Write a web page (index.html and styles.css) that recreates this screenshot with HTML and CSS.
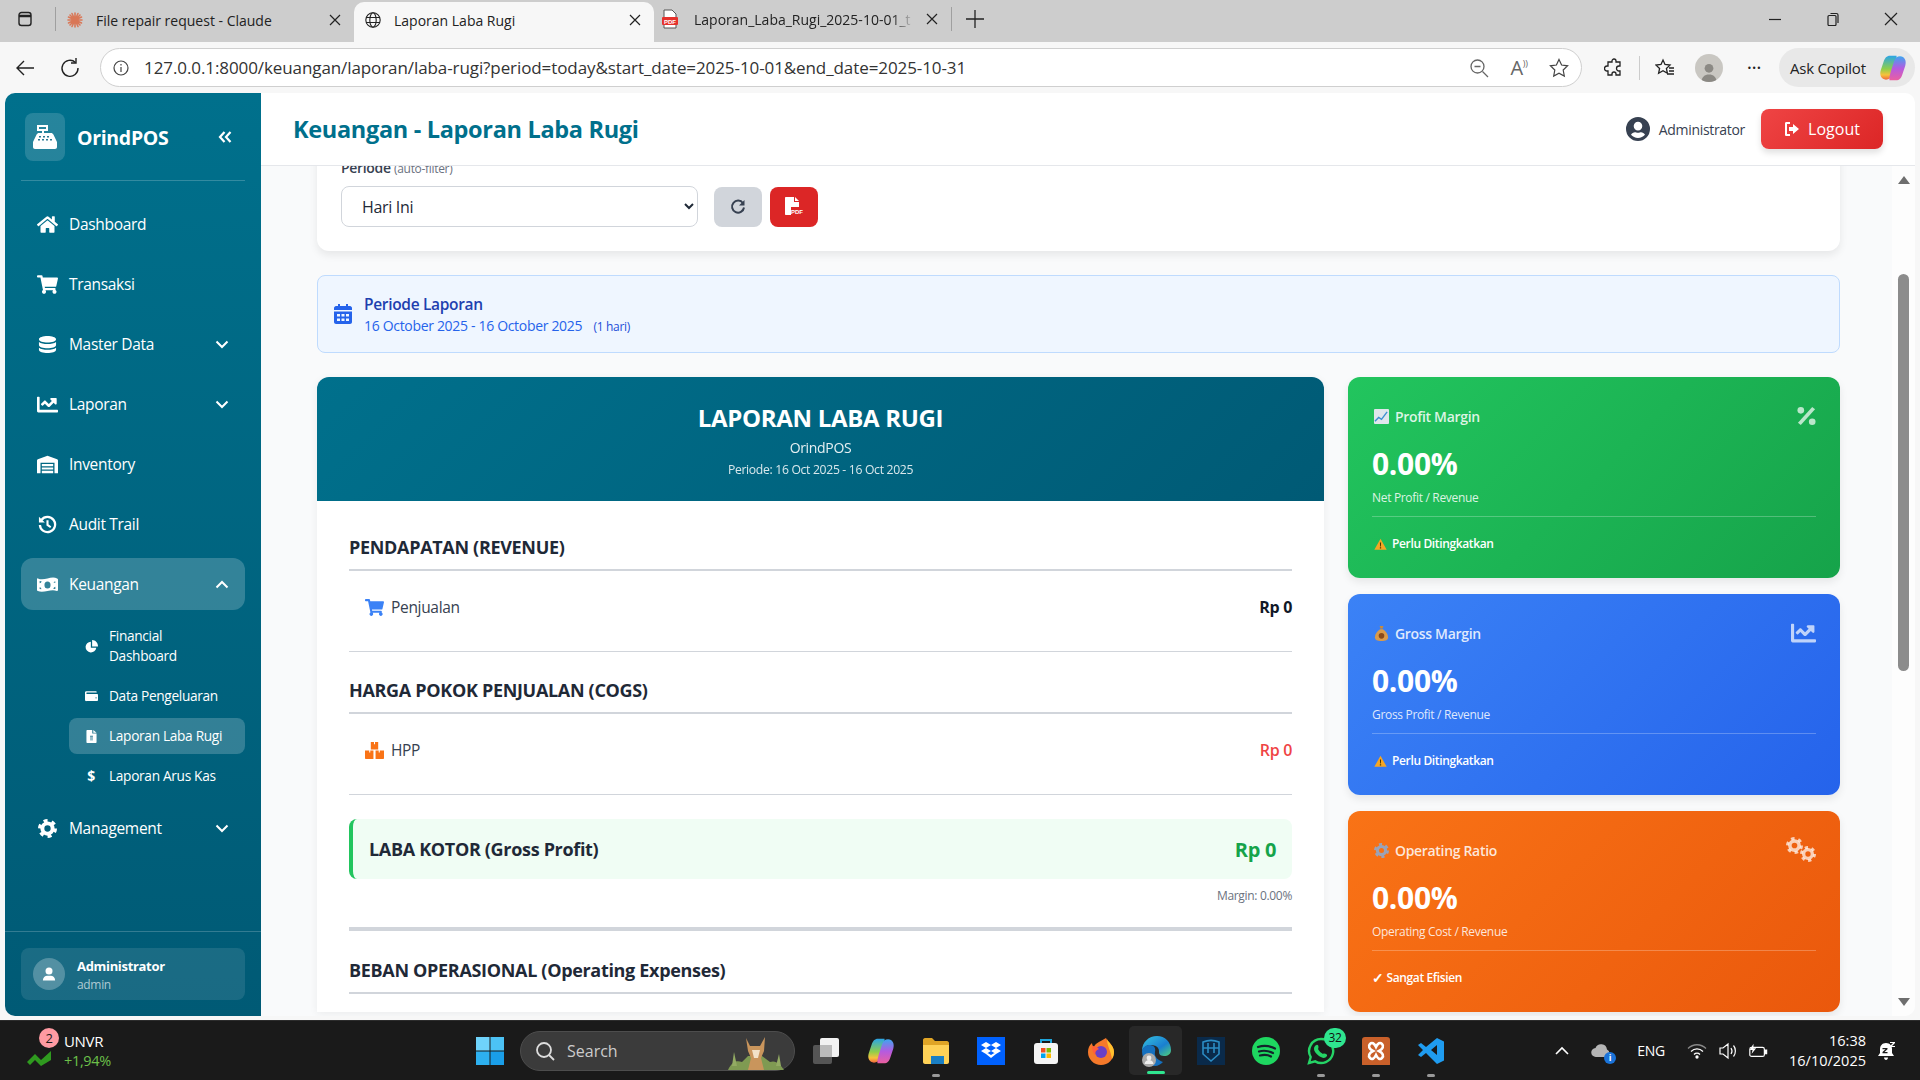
FILE: index.html
```html
<!DOCTYPE html>
<html lang="en">
  <head>
    <meta charset="UTF-8">
    <meta name="viewport" content="width=device-width, initial-scale=1.0">
    <title>Laporan Laba Rugi</title>
    <link rel="stylesheet" href="styles.css">
  </head>
  <body>
    <!-- Shared icons -->
    <svg class="defs" width="0" height="0">
      <defs>
        <symbol id="i-home" viewBox="0 0 576 512"><path d="M280.37 148.26L96 300.11V464a16 16 0 0 0 16 16l112.06-.29a16 16 0 0 0 15.92-16V368a16 16 0 0 1 16-16h64a16 16 0 0 1 16 16v95.64a16 16 0 0 0 16 16.05L464 480a16 16 0 0 0 16-16V300L295.67 148.26a12.19 12.19 0 0 0-15.3 0zM571.6 251.47L488 182.56V44.05a12 12 0 0 0-12-12h-56a12 12 0 0 0-12 12v72.61L318.47 43a48 48 0 0 0-61 0L4.34 251.47a12 12 0 0 0-1.6 16.9l25.5 31A12 12 0 0 0 45.15 301l235.22-193.74a12.19 12.19 0 0 1 15.3 0L530.9 301a12 12 0 0 0 16.9-1.6l25.5-31a12 12 0 0 0-1.7-16.93z"/></symbol>
        <symbol id="i-cart" viewBox="0 0 576 512"><path d="M528.12 301.319l47.273-208C578.806 78.301 567.391 64 551.99 64H159.208l-9.166-44.81C147.758 8.021 137.93 0 126.529 0H24C10.745 0 0 10.745 0 24v16c0 13.255 10.745 24 24 24h69.883l70.248 343.435C147.325 417.1 136 435.222 136 456c0 30.928 25.072 56 56 56s56-25.072 56-56c0-15.674-6.447-29.835-16.824-40h209.647C430.447 426.165 424 440.326 424 456c0 30.928 25.072 56 56 56s56-25.072 56-56c0-22.172-12.888-41.332-31.579-50.405l5.517-24.276c3.413-15.018-8.002-29.319-23.403-29.319H218.117l-6.545-32h293.145c11.206 0 20.92-7.754 23.403-18.681z"/></symbol>
        <symbol id="i-chart" viewBox="0 60 512 392"><path d="M496 384H64V80c0-8.84-7.16-16-16-16H16C7.16 64 0 71.16 0 80v336c0 17.67 14.33 32 32 32h464c8.84 0 16-7.16 16-16v-32c0-8.84-7.16-16-16-16zM464 96H345.94c-21.38 0-32.09 25.85-16.97 40.97l32.4 32.4L288 242.75l-73.37-73.37c-12.5-12.5-32.76-12.5-45.25 0l-68.69 68.69c-6.25 6.25-6.25 16.38 0 22.63l22.62 22.62c6.25 6.25 16.38 6.25 22.63 0L192 237.25l73.37 73.37c12.5 12.5 32.76 12.5 45.25 0l96-96 32.4 32.4c15.12 15.12 40.97 4.41 40.97-16.97V112c.01-8.84-7.15-16-15.99-16z"/></symbol>
        <symbol id="i-db" viewBox="0 0 20 20"><path d="M10 1c4.6 0 9 1.3 9 3.5S14.600 8 10 8 1 6.700 1 4.500 5.400 1 10 1zM1 7.300C2.800 8.900 6.400 9.500 10 9.500s7.200-.6 9-2.200v3.200c0 2.200-4.400 3.500-9 3.500s-9-1.300-9-3.500zM1 13.300c1.800 1.600 5.400 2.200 9 2.200s7.200-.6 9-2.200v2.200c0 2.200-4.400 3.500-9 3.500s-9-1.300-9-3.500z"/></symbol>
        <symbol id="i-warehouse" viewBox="0 0 24 20"><path d="M12 0l11 4c.6.2 1 .8 1 1.400V20h-4V8H4v12H0V5.400C0 4.800.4 4.200 1 4z"/><path d="M5.500 9.500h13v2.500h-13zM5.500 13.300h13v2.500h-13zM5.500 17.100h13V20h-13z"/></symbol>
        <symbol id="i-history" viewBox="0 0 20 20"><path d="M3.600 5.200A8 8 0 1 1 2 10.500" fill="none" stroke="currentColor" stroke-width="2.400"/><path d="M1 1.800l6.200 6.200H1z"/><path d="M10 5.500V10.500l3.400 2.400" fill="none" stroke="currentColor" stroke-width="2.200"/></symbol>
        <symbol id="i-money" viewBox="0 0 24 18"><path fill-rule="evenodd" d="M1 2c3.500 1.500 7 1 11 0s8-1.500 11 0c.6.2 1 .7 1 1.300v12c0 .8-.8 1.200-1.400 1-3.100-1.300-6.600-.9-10.600.1s-8 1.500-11 .1c-.6-.2-1-.7-1-1.300V3c0-.8.400-1.200 1-1zM12 5.500a3.500 4 0 1 0 0 8 3.500 4 0 0 0 0-8zM3 5v2.500c1.300 0 2-.8 2.200-2.200zM21 5.500c-1 0-1.800.5-2 1.500h2zM3 12v2l2 .3c0-1.300-.8-2.300-2-2.300zM21 11.500c-1.300.1-2 1.100-2.200 2.500l2.200.1z"/></symbol>
        <symbol id="i-pie" viewBox="0 0 20 20"><path d="M9 2.500a8.300 8.300 0 1 0 8.400 9.500H9z"/><path d="M11 0v10h9c0-5.500-4-10-9-10z"/></symbol>
        <symbol id="i-wallet" viewBox="0 0 20 16"><path d="M2 0h15c.6 0 1 .4 1 1v1H3c-.6 0-1 .4-1 1s.4 1 1 1h15.500c.8 0 1.500.7 1.500 1.500v8c0 .8-.7 1.500-1.500 1.500H2.500C1.100 15.500 0 14.400 0 13V2C0 .900.900 0 2 0zm15 9a1 1 0 1 0 0 2 1 1 0 0 0 0-2z"/></symbol>
        <symbol id="i-invoice" viewBox="0 0 14 18"><path d="M1 0h7v5h6v12c0 .6-.4 1-1 1H1c-.6 0-1-.4-1-1V1c0-.6.400-1 1-1zM9.500 0L14 3.800H9.500z"/><path d="M5 8h4v1.300H5zM5 10.500h4v1.300H5zM5 13h4v1.300H5z" fill="#2c7a93"/></symbol>
        <symbol id="i-cog" viewBox="0 0 24 24"><circle cx="12" cy="12" r="6.500" fill="none" stroke="currentColor" stroke-width="5"/><circle cx="12" cy="12" r="10" fill="none" stroke="currentColor" stroke-width="4" stroke-dasharray="5 5.470"/></symbol>
        <symbol id="i-user" viewBox="0 0 16 16"><circle cx="8" cy="4.500" r="4"/><path d="M1 15.500c0-3.400 2.400-5.500 5-5.500h4c2.600 0 5 2.100 5 5.500z"/></symbol>
        <symbol id="i-usercircle" viewBox="0 0 24 24"><path fill-rule="evenodd" d="M12 0a12 12 0 1 1 0 24 12 12 0 0 1 0-24zm0 4.800a4.300 4.300 0 1 0 0 8.600 4.300 4.300 0 0 0 0-8.600zM12 21c2.800 0 5.300-1.200 7-3.200-.8-1.700-2.400-2.600-4-2.600-.7 0-1.700.6-3 .6s-2.300-.6-3-.6c-1.600 0-3.200.9-4 2.600 1.700 2 4.200 3.200 7 3.200z"/></symbol>
        <symbol id="i-warn" viewBox="0 0 16 16"><path d="M8 1l7.600 13.500H.4z" fill="#f6a623"/><path d="M7.300 5.500h1.400l-.2 5h-1zM7.200 11.500h1.600v1.500H7.200z" fill="#4a3500"/></symbol>
        <symbol id="i-gear-emoji" viewBox="0 0 24 24"><circle cx="12" cy="12" r="6.500" fill="none" stroke="#9aa3b8" stroke-width="5"/><circle cx="12" cy="12" r="10" fill="none" stroke="#9aa3b8" stroke-width="4" stroke-dasharray="5 5.470"/></symbol>
        <linearGradient id="g-edge" x1="0" y1="0" x2="1" y2="1"><stop offset="0" stop-color="#36c3e0"/><stop offset=".6" stop-color="#1a7fd0"/><stop offset="1" stop-color="#50d27a"/></linearGradient>
        <linearGradient id="g-cop" x1="0" y1="0" x2="0" y2="1"><stop offset="0" stop-color="#2aa5e8"/><stop offset=".55" stop-color="#8fce4a"/><stop offset=".8" stop-color="#f7c23c"/><stop offset="1" stop-color="#f0683c"/></linearGradient>
        <linearGradient id="g-cop2" x1="0" y1="0" x2="0" y2="1"><stop offset="0" stop-color="#ea5fa0"/><stop offset=".5" stop-color="#b45be0"/><stop offset="1" stop-color="#3ea5f0"/></linearGradient>
        <symbol id="i-copilot" viewBox="0 0 24 24"><path d="M15 1.500H9.500c-3 0-4.500 2-5.500 5L1.500 14c-1.300 4 .5 8 4.500 8 2.500 0 4-1.500 5-4l3-9.500c.5-2 1.500-5 1-7z" fill="url(#g-cop)"/><path d="M15 1.500H9.500c-3 0-4.500 2-5.500 5L1.500 14c-1.300 4 .5 8 4.500 8 2.500 0 4-1.500 5-4l3-9.500c.5-2 1.500-5 1-7z" fill="url(#g-cop2)" transform="rotate(180 12 12)"/></symbol>
      </defs>
    </svg>

    <div class="screen">
      <!-- Browser tabs -->
      <div class="tabbar">
        <div class="tab-side">
          <svg class="ic16" viewBox="0 0 16 16" fill="none" stroke="#222" stroke-width="1.400"><rect x="2" y="1.500" width="12" height="13" rx="2.500"/><path d="M2 5h12" stroke-width="2.500"/></svg>
        </div>
        <div class="tab">
          <svg class="ic16" viewBox="0 0 16 16" stroke="#d97757" stroke-width="1.600" stroke-linecap="round"><path d="M8 1v14M1 8h14M3 3l10 10M13 3L3 13M5 1.500l6 13M11 1.500l-6 13M1.500 5l13 6M1.500 11l13-6"/></svg>
          <span class="tab-title">File repair request - Claude</span>
          <svg class="tab-x" viewBox="0 0 12 12" stroke="#222" stroke-width="1.200"><path d="M1 1l10 10M11 1L1 11"/></svg>
        </div>
        <div class="tab tab-active">
          <svg class="ic16" viewBox="0 0 16 16" fill="none" stroke="#222" stroke-width="1.100"><circle cx="8" cy="8" r="7.200"/><ellipse cx="8" cy="8" rx="3.200" ry="7.200"/><path d="M1 5.500h14M1 10.500h14"/></svg>
          <span class="tab-title">Laporan Laba Rugi</span>
          <svg class="tab-x" viewBox="0 0 12 12" stroke="#222" stroke-width="1.200"><path d="M1 1l10 10M11 1L1 11"/></svg>
        </div>
        <div class="tab tab-pdf">
          <svg class="ic20" viewBox="0 0 20 20"><path d="M4 1h8l4 4v14H4z" fill="#fff" stroke="#555"/><rect x="2" y="8" width="16" height="8" rx="1" fill="#e5322d"/><text x="10" y="14.500" class="pdf-mini">PDF</text></svg>
          <span class="tab-title tab-fade">Laporan_Laba_Rugi_2025-10-01_t</span>
          <svg class="tab-x" viewBox="0 0 12 12" stroke="#222" stroke-width="1.200"><path d="M1 1l10 10M11 1L1 11"/></svg>
        </div>
        <div class="tab-new">
          <svg class="ic20" viewBox="0 0 20 20" stroke="#222" stroke-width="1.300"><path d="M10 1v18M1 10h18"/></svg>
        </div>
        <div class="window-controls">
          <svg class="ic14" viewBox="0 0 14 14" stroke="#222" stroke-width="1.200"><path d="M1 7.500h12"/></svg>
          <svg class="ic14" viewBox="0 0 14 14" fill="none" stroke="#222" stroke-width="1.200"><rect x="2" y="3.500" width="8" height="10" rx="1"/><path d="M4.500 1.500h6a1.500 1.500 0 0 1 1.500 1.500v8"/></svg>
          <svg class="ic14" viewBox="0 0 14 14" stroke="#222" stroke-width="1.200"><path d="M1 1l12 12M13 1L1 13"/></svg>
        </div>
      </div>

      <!-- Address bar -->
      <div class="toolbar">
        <svg class="tool-back ic20" viewBox="0 0 20 20" fill="none" stroke="#222" stroke-width="1.400"><path d="M19 10H2M9 3l-7 7 7 7"/></svg>
        <svg class="tool-reload ic20" viewBox="0 0 20 20" fill="none" stroke="#222" stroke-width="1.400"><path d="M15.500 4.500A8 8 0 1 0 18 10"/><path d="M16 0v5h-5"/></svg>
        <div class="address">
          <svg class="ic16" viewBox="0 0 16 16" fill="none" stroke="#444" stroke-width="1.200"><circle cx="8" cy="8" r="7"/><path d="M8 7v5M8 4v1.500"/></svg>
          <span class="url">127.0.0.1:8000/keuangan/laporan/laba-rugi?period=today&amp;start_date=2025-10-01&amp;end_date=2025-10-31</span>
          <div class="address-tools">
            <svg class="ic20" viewBox="0 0 20 20" fill="none" stroke="#666" stroke-width="1.300"><circle cx="8.500" cy="8.500" r="6.500"/><path d="M13.500 13.500L19 19M5.500 8.500h6"/></svg>
            <span class="read-aloud">A<sup>))</sup></span>
            <svg class="ic20" viewBox="0 0 20 20" fill="none" stroke="#444" stroke-width="1.200"><path d="M10 1.500l2.600 5.500 6 .8-4.400 4.200 1.100 6-5.300-2.900-5.300 2.900 1.100-6L1.400 7.800l6-.8z"/></svg>
          </div>
        </div>
        <div class="tool-right">
          <svg class="ic20" viewBox="0 0 20 20" fill="none" stroke="#222" stroke-width="1.300"><path d="M8 3a2 2 0 0 1 4 0v1h4v4h-1a2.500 2.500 0 0 0 0 5h1v4h-4v-1a2 2 0 0 0-4 0v1H4v-4H3a2.500 2.500 0 0 1 0-5h1V4h4z"/></svg>
          <span class="tool-sep"></span>
          <svg class="ic20" viewBox="0 0 20 20" fill="none" stroke="#222" stroke-width="1.300"><path d="M8 2l2 4.500 5 .6-3.600 3.400 1 4.800L8 12.800l-4.400 2.500 1-4.800L1 7.100l5-.6zM14 10h5M14 13h5M12 16h7"/></svg>
          <span class="tool-avatar"><svg class="ic20" viewBox="0 0 16 16" fill="#8b8984"><circle cx="8" cy="5" r="3.500"/><path d="M2 16c0-4 2.500-6 6-6s6 2 6 6z"/></svg></span>
          <span class="tool-dots">&middot;&middot;&middot;</span>
        </div>
        <div class="copilot-pill">
          <span>Ask Copilot</span>
          <svg class="ic28"><use href="#i-copilot"/></svg>
        </div>
      </div>

      <!-- The page itself -->
      <div class="page">
        <aside class="sidebar">
          <div class="brand">
            <div class="brand-logo">
              <svg class="brand-ic" viewBox="0 0 26 24" fill="#fff"><path d="M5 0h11v6H12v2h7c1 0 2 .6 2.400 1.500L25 17v5c0 1-.8 2-2 2H3c-1.200 0-2-1-2-2v-5L4.600 9.500C5 8.600 6 8 7 8h3V6H5zM7 2v2h7V2z"/><path d="M7 11h2v1.500H7zM11 11h2v1.500h-2zM15 11h2v1.500h-2zM6 14h2v1.500H6zM10 14h2v1.500h-2zM14 14h2v1.500h-2zM18 14h2v1.500h-2z" fill="#2c7a93"/></svg>
            </div>
            <span class="brand-name">OrindPOS</span>
            <svg class="brand-toggle" viewBox="0 0 14 12" fill="none" stroke="#fff" stroke-width="2.200"><path d="M6.500 1L2 6l4.500 5M12.500 1L8 6l4.500 5"/></svg>
          </div>

          <nav class="nav">
            <a class="nav-item"><span class="nav-ic"><svg class="ic-nav"><use href="#i-home"/></svg></span>Dashboard</a>
            <a class="nav-item"><span class="nav-ic"><svg class="ic-nav"><use href="#i-cart"/></svg></span>Transaksi</a>
            <a class="nav-item"><span class="nav-ic"><svg class="ic-nav"><use href="#i-db"/></svg></span>Master Data<svg class="nav-caret" viewBox="0 0 14 9" fill="none" stroke="#fff" stroke-width="2"><path d="M1.500 1.500L7 7l5.500-5.500"/></svg></a>
            <a class="nav-item"><span class="nav-ic"><svg class="ic-nav"><use href="#i-chart"/></svg></span>Laporan<svg class="nav-caret" viewBox="0 0 14 9" fill="none" stroke="#fff" stroke-width="2"><path d="M1.500 1.500L7 7l5.500-5.500"/></svg></a>
            <a class="nav-item"><span class="nav-ic"><svg class="ic-nav"><use href="#i-warehouse"/></svg></span>Inventory</a>
            <a class="nav-item"><span class="nav-ic"><svg class="ic-nav"><use href="#i-history"/></svg></span>Audit Trail</a>
            <a class="nav-item nav-open"><span class="nav-ic"><svg class="ic-nav"><use href="#i-money"/></svg></span>Keuangan<svg class="nav-caret" viewBox="0 0 14 9" fill="none" stroke="#fff" stroke-width="2"><path d="M1.500 7.500L7 2l5.500 5.500"/></svg></a>
            <div class="subnav">
              <a class="sub-item"><span class="sub-ic"><svg class="ic-sub"><use href="#i-pie"/></svg></span><span>Financial<br>Dashboard</span></a>
              <a class="sub-item"><span class="sub-ic"><svg class="ic-sub"><use href="#i-wallet"/></svg></span>Data Pengeluaran</a>
              <a class="sub-item sub-active"><span class="sub-ic"><svg class="ic-sub"><use href="#i-invoice"/></svg></span>Laporan Laba Rugi</a>
              <a class="sub-item"><span class="sub-ic sub-dollar">$</span>Laporan Arus Kas</a>
            </div>
            <a class="nav-item"><span class="nav-ic"><svg class="ic-nav"><use href="#i-cog"/></svg></span>Management<svg class="nav-caret" viewBox="0 0 14 9" fill="none" stroke="#fff" stroke-width="2"><path d="M1.500 1.500L7 7l5.500-5.500"/></svg></a>
          </nav>

          <div class="side-foot">
            <div class="side-user">
              <span class="side-avatar"><svg class="ic14 white"><use href="#i-user"/></svg></span>
              <div class="side-text">
                <div class="side-name">Administrator</div>
                <div class="side-role">admin</div>
              </div>
            </div>
          </div>
        </aside>

        <main class="main">
          <header class="topbar">
            <h1 class="page-title">Keuangan - Laporan Laba Rugi</h1>
            <div class="topbar-right">
              <svg class="ic24 slate"><use href="#i-usercircle"/></svg>
              <span class="topbar-user">Administrator</span>
              <button class="btn-logout">
                <svg class="ic16" viewBox="0 0 16 16" fill="#fff"><path d="M6 1v2H3v10h3v2H2.500C1.500 15 1 14.500 1 13.500v-11C1 1.500 1.500 1 2.500 1z"/><path d="M9 3l6 5-6 5v-3H5V6h4z"/></svg>
                Logout
              </button>
            </div>
          </header>

          <div class="main-body">
            <div class="content">
              <section class="filter-card">
                <label class="filter-label">Periode <small>(auto-filter)</small></label>
                <div class="filter-row">
                  <select class="filter-select"><option>Hari Ini</option></select>
                  <button class="btn-square btn-grey">
                    <svg class="ic16" viewBox="0 0 16 16" fill="none" stroke="#374151" stroke-width="2"><path d="M13 4.200A6 6 0 1 0 14 8.500"/><path d="M14.500 1v5.500H9z" fill="#374151" stroke="none"/></svg>
                  </button>
                  <button class="btn-square btn-red">
                    <svg class="ic-pdf" viewBox="0 0 18 20"><path d="M1 0h8v5h5v5H6v8H1c-.6 0-1-.4-1-1V1c0-.6.400-1 1-1z" fill="#fff"/><path d="M10 0l4 4h-4z" fill="#fff"/><text x="12" y="16.500" class="pdf-mini">PDF</text></svg>
                  </button>
                </div>
              </section>

              <section class="period-box">
                <svg class="period-ic" viewBox="0 0 18 20" fill="#2563eb"><path d="M4 0h2v2h6V0h2v2h2c1 0 2 1 2 2v2H0V4c0-1 1-2 2-2h2z"/><path fill-rule="evenodd" d="M0 7.500h18V18c0 1-1 2-2 2H2c-1 0-2-1-2-2zM3 10v2.500h3V10zM7.500 10v2.500h3V10zM12 10v2.500h3V10zM3 14.500V17h3v-2.500zM7.500 14.500V17h3v-2.500zM12 14.500V17h3v-2.500z"/></svg>
                <div>
                  <div class="period-title">Periode Laporan</div>
                  <div class="period-dates">16 October 2025 - 16 October 2025 <small>(1 hari)</small></div>
                </div>
              </section>

              <div class="report-grid">
                <section class="report">
                  <div class="report-head">
                    <h2>LAPORAN LABA RUGI</h2>
                    <p class="report-company">OrindPOS</p>
                    <p class="report-range">Periode: 16 Oct 2025 - 16 Oct 2025</p>
                  </div>
                  <div class="report-body">
                    <div class="report-section">
                      <h3 class="section-title">PENDAPATAN (REVENUE)</h3>
                      <div class="line">
                        <span class="line-name"><svg class="line-ic blue"><use href="#i-cart"/></svg>Penjualan</span>
                        <span class="line-val">Rp 0</span>
                      </div>
                    </div>
                    <div class="report-section">
                      <h3 class="section-title">HARGA POKOK PENJUALAN (COGS)</h3>
                      <div class="line">
                        <span class="line-name">
                          <svg class="line-ic orange" viewBox="0 0 18 16" fill="currentColor"><path d="M5.500 0h3v2h1V0h3v7h-7zM0 8h4v2h1V8h3v8H1c-.6 0-1-.4-1-1zM10 8h3v2h1V8h4v7c0 .6-.4 1-1 1h-7z"/></svg>HPP
                        </span>
                        <span class="line-val red">Rp 0</span>
                      </div>
                    </div>
                    <div class="gross-box">
                      <span class="gross-name">LABA KOTOR (Gross Profit)</span>
                      <span class="gross-val">Rp 0</span>
                    </div>
                    <p class="gross-margin">Margin: 0.00%</p>
                    <div class="thick-rule"></div>
                    <h3 class="section-title">BEBAN OPERASIONAL (Operating Expenses)</h3>
                  </div>
                </section>

                <div class="metrics">
                  <section class="metric metric-green">
                    <div class="metric-head">
                      <span class="metric-label">
                        <svg class="emoji" viewBox="0 0 16 16"><rect width="16" height="16" rx="1" fill="#dfe6ec"/><path d="M1 13l4-4 3 2 6-8" fill="none" stroke="#3d8fd1" stroke-width="1.500"/></svg>Profit Margin
                      </span>
                      <svg class="metric-ic" viewBox="0 0 20 20" fill="currentColor"><circle cx="4" cy="4" r="3.500"/><circle cx="16" cy="16" r="3.500"/><path d="M16 .5l3 2.500L4 19.500l-3-2.500z"/></svg>
                    </div>
                    <div class="metric-value">0.00%</div>
                    <div class="metric-sub">Net Profit / Revenue</div>
                    <div class="metric-status"><svg class="emoji-sm"><use href="#i-warn"/></svg>Perlu Ditingkatkan</div>
                  </section>
                  <section class="metric metric-blue">
                    <div class="metric-head">
                      <span class="metric-label">
                        <svg class="emoji" viewBox="0 0 16 16"><path d="M6 0h4l-1 3H7z" fill="#c98a3a"/><path d="M6.500 3.500h3C13 6 15 9 15 12c0 3-2.500 4-7 4s-7-1-7-4c0-3 2-6 5.500-8.500z" fill="#d99a4a"/><circle cx="8" cy="10.500" r="3" fill="#8a4a1a"/></svg>Gross Margin
                      </span>
                      <svg class="metric-ic metric-ic-chart"><use href="#i-chart"/></svg>
                    </div>
                    <div class="metric-value">0.00%</div>
                    <div class="metric-sub">Gross Profit / Revenue</div>
                    <div class="metric-status"><svg class="emoji-sm"><use href="#i-warn"/></svg>Perlu Ditingkatkan</div>
                  </section>
                  <section class="metric metric-orange">
                    <div class="metric-head">
                      <span class="metric-label"><svg class="emoji"><use href="#i-gear-emoji"/></svg>Operating Ratio</span>
                      <span class="metric-cogs">
                        <svg class="cog-a"><use href="#i-cog"/></svg>
                        <svg class="cog-b"><use href="#i-cog"/></svg>
                      </span>
                    </div>
                    <div class="metric-value">0.00%</div>
                    <div class="metric-sub">Operating Cost / Revenue</div>
                    <div class="metric-status"><span class="check">&#10003;</span> Sangat Efisien</div>
                  </section>
                </div>
              </div>
            </div>

            <div class="scroll-rail">
              <span class="arrow-up"></span>
              <span class="scroll-thumb"></span>
              <span class="arrow-down"></span>
            </div>
          </div>
        </main>
      </div>

      <!-- Windows taskbar -->
      <footer class="taskbar">
        <div class="stock">
          <svg class="stock-ic" viewBox="0 0 30 18"><path d="M1 13l8-8 6 6 10-9v9l-10 6-6-6-5 5z" fill="#2f9a1f"/></svg>
          <span class="stock-badge">2</span>
          <div class="stock-text">
            <div>UNVR</div>
            <div class="stock-pct">+1,94%</div>
          </div>
        </div>
        <div class="app-cell">
          <svg class="ic28" viewBox="0 0 28 28" fill="#38b7f0"><rect width="13.500" height="13.500" fill="#6fd3fb"/><rect x="14.500" width="13.500" height="13.500" fill="#4cc2f5"/><rect y="14.500" width="13.500" height="13.500" fill="#2db0ef"/><rect x="14.500" y="14.500" width="13.500" height="13.500" fill="#1a9ee8"/></svg>
        </div>
        <div class="search">
          <svg class="ic20" viewBox="0 0 20 20" fill="none" stroke="#ddd" stroke-width="1.800"><circle cx="9" cy="9" r="7"/><path d="M14 14l5 5"/></svg>
          <span>Search</span>
          <svg class="search-art" viewBox="0 0 56 34"><path d="M0 34c4-8 8-10 14-8l6-6 14 0 8 6c6-2 10 2 14 8z" fill="#7f9a52"/><path d="M4 30l2-14 3 14zM48 30l3-12 2 12z" fill="#93ab63"/><path d="M18 2l4 8h10l5-9-1 14-3 7 3 12H20l3-12-3-7z" fill="#c9955c"/><path d="M24 14h8l-2 8h-4z" fill="#f2e2c8"/></svg>
        </div>
        <div class="app-cell">
          <svg class="ic28" viewBox="0 0 28 28"><rect x="1" y="8" width="19" height="19" rx="2" fill="#555"/><rect x="8" y="1" width="19" height="19" rx="2" fill="#f2f2f2"/><rect x="8" y="8" width="12" height="12" fill="#bbb"/></svg>
        </div>
        <div class="app-cell"><svg class="ic28"><use href="#i-copilot"/></svg></div>
        <div class="app-cell app-running">
          <svg class="ic28" viewBox="0 0 28 28"><path d="M1 3c0-1 .8-2 2-2h7l3 3h12c1 0 2 1 2 2v2H1z" fill="#e0a526"/><path d="M1 8h26v17c0 1-1 2-2 2H3c-1 0-2-1-2-2z" fill="#ffd257"/><rect x="9" y="19" width="13" height="8" fill="#1a7fc4"/></svg>
        </div>
        <div class="app-cell">
          <svg class="ic28" viewBox="0 0 28 28"><rect x="0" y="0" width="28" height="28" fill="#0061fe"/><path d="M9 5l5 3-5 3-5-3zM19 5l5 3-5 3-5-3zM9 11l5 3-5 3-5-3zM19 11l5 3-5 3-5-3zM14 18l5-3v2l-5 4-5-4v-2z" fill="#fff"/></svg>
        </div>
        <div class="app-cell">
          <svg class="ic28" viewBox="0 0 28 28"><path d="M9 6V3h10v3" fill="none" stroke="#1fa6dc" stroke-width="2"/><rect x="2" y="6" width="24" height="21" rx="3" fill="#f5f5f5"/><rect x="9" y="11" width="4.500" height="4.500" fill="#f25022"/><rect x="14.500" y="11" width="4.500" height="4.500" fill="#7fba00"/><rect x="9" y="16.500" width="4.500" height="4.500" fill="#00a4ef"/><rect x="14.500" y="16.500" width="4.500" height="4.500" fill="#ffb900"/></svg>
        </div>
        <div class="app-cell">
          <svg class="ic28" viewBox="0 0 28 28"><path d="M19 1c1 3 8 7 8 14a13 13 0 0 1-26 0c0-4 1.500-7 4-9 0 2 1 3 2 4 1-4 6-5 12-9z" fill="#f5792a"/><path d="M20 2c1 3 7 7 7 13 0 3-1 5-2 7-1-8-5-13-5-20z" fill="#ffc12e"/><circle cx="14" cy="15" r="6" fill="#6a3fc5"/><path d="M5 9c3 0 5 1 7 3-3 1-4 3-4 6-2-2-3-5-3-9z" fill="#ff5e3a"/></svg>
        </div>
        <div class="app-cell app-active">
          <svg class="ic32" viewBox="0 0 32 32"><path d="M2 16C2 7 9 1 17 1c8 0 14 6 14 14 0 4-3 6-7 6-5 0-5-3-5-5 0-4-4-6-8-6-5 0-8 3-9 6z" fill="url(#g-edge)"/><path d="M2 16c1-4 4-6 8-6 4 0 6 3 5 7-1 5 3 8 8 10-2 2-5 4-8 4C8 31 2 25 2 16z" fill="#1570bf"/><circle cx="9" cy="25" r="7" fill="#aaa"/><circle cx="9" cy="23" r="2.400" fill="#eee"/><path d="M4.500 29c.5-3 2.400-4 4.500-4s4 1 4.500 4z" fill="#eee"/></svg>
        </div>
        <div class="app-cell">
          <svg class="ic28" viewBox="0 0 28 28"><rect width="28" height="28" fill="#0a2a4a"/><path d="M6 5c5-2 11-2 16 0v12l-8 7-8-7zM11 6v10M17 6v10M6 11h16" fill="none" stroke="#2b8cc4" stroke-width="1.600"/></svg>
        </div>
        <div class="app-cell">
          <svg class="ic28" viewBox="0 0 28 28"><circle cx="14" cy="14" r="14" fill="#1ed760"/><path d="M6 10c6-2 11-1.500 17 1.500M7 14.500c5-1.500 9-1 14 1.500M8 18.500c4-1 8-.7 11 1" fill="none" stroke="#14232b" stroke-width="2.200" stroke-linecap="round"/></svg>
        </div>
        <div class="app-cell app-running">
          <svg class="ic28" viewBox="0 0 28 28"><path d="M14 2a12 12 0 0 0-10.300 18L2 26l6.200-1.600A12 12 0 1 0 14 2z" fill="none" stroke="#25d366" stroke-width="2.400"/><path d="M9.500 8c2-1 2.500 3 1.500 4 1 2 3 4 5 5 1-1 5 0 4 2-2 3-5 2-8 0s-5-5-5-7c0-2 1-3.500 2.500-4z" fill="#25d366"/></svg>
          <span class="wa-badge">32</span>
        </div>
        <div class="app-cell app-running">
          <svg class="ic28" viewBox="0 0 28 28"><rect width="28" height="30" rx="3" fill="#c9602a"/><path d="M8 7c2-2 4-1 6 3 2-4 4-5 6-3s1 5-3 7c4 2 5 5 3 7s-4 1-6-3c-2 4-4 5-6 3s-1-5 3-7c-4-2-5-5-3-7z" fill="none" stroke="#fff" stroke-width="2.600"/></svg>
        </div>
        <div class="app-cell app-running">
          <svg class="ic28" viewBox="0 0 28 28"><path d="M20 1l7 3.500v19L20 27 9 16l-5 4-3-2 5-5-5-5 3-2 5 4zM20 8l-6 5 6 5z" fill="#1f9cf0"/></svg>
        </div>

        <div class="tray">
          <svg class="ic14" viewBox="0 0 14 14" fill="none" stroke="#fff" stroke-width="1.600"><path d="M1 10l6-6 6 6"/></svg>
          <span class="tray-cloud">
            <svg class="ic20" viewBox="0 0 20 16" fill="#b5b5b5"><path d="M5 14a4.500 4.500 0 0 1-.5-9A6 6 0 0 1 16 6.500 4 4 0 0 1 15.500 14z"/></svg>
            <span class="tray-info">i</span>
          </span>
          <span class="tray-lang">ENG</span>
          <svg class="ic20" viewBox="0 0 20 16" fill="none" stroke="#fff" stroke-width="1.300"><path d="M1 5.500c5-5 13-5 18 0" stroke="#888"/><path d="M4 8.500c3.500-3.400 8.500-3.400 12 0M7 11.500c1.700-1.700 4.300-1.700 6 0"/><circle cx="10" cy="14" r="1" fill="#fff"/></svg>
          <svg class="ic20" viewBox="0 0 20 20" fill="none" stroke="#fff" stroke-width="1.200"><path d="M2 7h3l5-4v14l-5-4H2zM13 7c1.200 1.800 1.200 4.200 0 6M15.500 4.500c2.500 3 2.500 8 0 11"/></svg>
          <svg class="ic20" viewBox="0 0 22 18" fill="none" stroke="#fff" stroke-width="1.300"><rect x="2" y="5" width="16" height="10" rx="2"/><path d="M18.500 8v4h2V8z" fill="#fff"/><path d="M6 1L2 8h3l-1 4 5-6H6z" fill="#fff" stroke="none"/></svg>
          <div class="tray-clock">
            <div>16:38</div>
            <div>16/10/2025</div>
          </div>
          <svg class="ic20" viewBox="0 0 20 20" fill="#fff"><path d="M9 2c4 0 6 3 6 6v4l2 3H1l2-3V8c0-3 2-6 6-6zM7 16.500h4c0 1.500-1 2.500-2 2.500s-2-1-2-2.500z"/><path d="M5.500 7h5v1.200L7.500 11h3v1.200h-5V11l3-2.800h-3z" fill="#1a1a1a"/><path d="M13 1h5v1l-3 3h3v1h-5V5l3-3h-3z"/></svg>
        </div>
      </footer>
    </div>
  </body>
</html>
```

FILE: styles.css
```css
* {
  box-sizing: border-box;
}

body {
  margin: 0;
  font-family: "Open Sans", "Noto Sans", sans-serif;
  letter-spacing: -0.02em;
  color: #1f2937;
  background: #f7f7f7;
}

h1, h2, h3, p {
  margin: 0;
}

button {
  font-family: inherit;
  border: 0;
}

.defs {
  position: absolute;
}

.screen {
  display: flex;
  flex-direction: column;
  width: 1920px;
  height: 1080px;
  overflow: hidden;
}

/* generic icon sizes */
.ic14 { width: 14px; height: 14px; flex: none; }
.ic16 { width: 16px; height: 16px; flex: none; }
.ic20 { width: 20px; height: 20px; flex: none; }
.ic24 { width: 24px; height: 24px; flex: none; }
.ic28 { width: 28px; height: 28px; flex: none; }
.ic32 { width: 32px; height: 32px; flex: none; }
.white { fill: #fff; }
.slate { fill: #374151; }
.blue { color: #3b82f6; fill: #3b82f6; }
.orange { color: #f97316; fill: #f97316; }

.pdf-mini {
  font-family: "Liberation Sans", sans-serif;
  font-size: 6px;
  font-weight: 700;
  letter-spacing: 0;
  fill: #fff;
  text-anchor: middle;
}

/* browser tabs */
.tabbar {
  display: flex;
  align-items: center;
  height: 42px;
  background: #cdcdcd;
  font-size: 14px;
  letter-spacing: 0;
  color: #222;
}

.tab-side {
  display: flex;
  align-items: center;
  width: 56px;
  height: 24px;
  margin-bottom: 4px;
  padding-left: 17px;
  border-right: 1px solid #9f9f9f;
}

.tab {
  display: flex;
  align-items: center;
  width: 298px;
  height: 42px;
  padding: 0 13px 2px 11px;
}

.tab-title {
  flex: 1;
  margin-left: 13px;
  white-space: nowrap;
  overflow: hidden;
}

.tab-fade {
  -webkit-mask-image: linear-gradient(90deg, #000 90%, transparent);
  mask-image: linear-gradient(90deg, #000 90%, transparent);
  margin-left: 14px;
  margin-right: 12px;
}

.tab-x {
  width: 12px;
  height: 12px;
  flex: none;
}

.tab-active {
  width: 300px;
  margin-top: 2px;
  height: 40px;
  padding-bottom: 4px;
  background: #f7f7f7;
  border-radius: 10px 10px 0 0;
}

.tab-pdf {
  padding: 0 13px 0 6px;
  margin-bottom: 4px;
  border-right: 1px solid #9f9f9f;
  height: 24px;
  width: 298px;
}

.tab-new {
  display: flex;
  justify-content: center;
  width: 46px;
  margin-bottom: 4px;
}

.window-controls {
  display: grid;
  grid-template-columns: repeat(3, 58px);
  justify-items: center;
  margin-left: auto;
  margin-bottom: 4px;
}

/* address bar */
.toolbar {
  display: flex;
  align-items: center;
  height: 51px;
  background: #f7f7f7;
  color: #222;
}

.tool-back {
  margin-left: 15px;
}

.tool-reload {
  margin-left: 25px;
}

.address {
  display: flex;
  align-items: center;
  width: 1482px;
  height: 39px;
  margin-left: 20px;
  padding: 0 2px 0 12px;
  background: #fff;
  border: 1px solid #cfcfcf;
  border-radius: 20px;
}

.url {
  margin-left: 15px;
  font-size: 17px;
  letter-spacing: -0.09px;
  color: #333;
  white-space: nowrap;
}

.address-tools {
  display: grid;
  grid-template-columns: repeat(3, 40px);
  justify-items: center;
  align-items: center;
  margin-left: auto;
}

.read-aloud {
  font-size: 20px;
  color: #666;
  line-height: 20px;
}

.read-aloud sup {
  font-size: 9px;
  line-height: 0;
}

.tool-right {
  display: grid;
  grid-template-columns: 21px 30px 21px 68px 22px;
  align-items: center;
  justify-items: center;
  flex: none;
  width: 176px;
  margin-left: 21px;
}

.tool-sep {
  width: 1px;
  height: 24px;
  background: #ccc;
}

.tool-avatar {
  display: flex;
  align-items: flex-end;
  justify-content: center;
  width: 28px;
  height: 28px;
  border-radius: 50%;
  background: #c9c7c2;
  overflow: hidden;
}

.tool-dots {
  font-size: 20px;
  line-height: 20px;
  letter-spacing: -0.5px;
}

.copilot-pill {
  display: flex;
  align-items: center;
  justify-content: space-between;
  flex: none;
  width: 136px;
  height: 39px;
  padding: 0 11px 0 11px;
  border-radius: 20px;
  background: #e8e8e8;
  font-size: 15px;
  letter-spacing: -0.2px;
  white-space: nowrap;
}

.copilot-pill .ic28 {
  margin-right: -3px;
}

/* page frame */
.page {
  flex: 1;
  display: flex;
  min-height: 0;
  margin: 0 5px 4px;
  border-radius: 10px;
  overflow: hidden;
  background: #f9fafb;
}

.sidebar {
  display: flex;
  flex-direction: column;
  flex: none;
  width: 256px;
  background: linear-gradient(180deg, #00708c, #005a75);
  color: #fff;
}

.brand {
  display: flex;
  align-items: center;
  height: 88px;
  margin: 0 16px;
  padding: 20px 13px 20px 4px;
  border-bottom: 1px solid rgba(255, 255, 255, 0.2);
}

.brand-logo {
  display: flex;
  align-items: center;
  justify-content: center;
  width: 40px;
  height: 48px;
  border-radius: 8px;
  background: rgba(255, 255, 255, 0.15);
}

.brand-ic {
  width: 26px;
  height: 24px;
}

.brand-name {
  margin: 2px 0 0 12px;
  font-size: 19.500px;
  font-weight: 700;
}

.brand-toggle {
  width: 14px;
  height: 12px;
  margin-left: auto;
}

.nav {
  display: flex;
  flex-direction: column;
  gap: 8px;
  padding: 17px 16px 0;
  flex: 1;
}

.nav-item {
  display: flex;
  align-items: center;
  height: 52px;
  padding: 0 16px;
  font-size: 15.500px;
  border-radius: 12px;
}

.nav-ic {
  display: flex;
  justify-content: center;
  width: 22px;
  margin: 0 11px 0 -1px;
}

.ic-nav {
  width: 21px;
  height: 19px;
  fill: #fff;
  color: #fff;
}

.nav-caret {
  width: 14px;
  height: 9px;
  margin-left: auto;
}

.nav-open {
  background: rgba(255, 255, 255, 0.2);
}

.subnav {
  display: flex;
  flex-direction: column;
  gap: 4px;
  margin: 0 0 0 48px;
}

.sub-item {
  display: flex;
  align-items: center;
  min-height: 36px;
  padding: 0 12px;
  font-size: 13.700px;
  line-height: 20px;
  border-radius: 8px;
}

.sub-item:first-child {
  height: 56px;
}

.sub-ic {
  display: flex;
  flex: none;
  justify-content: center;
  width: 20px;
  margin: 0 8px 0 0;
}

.sub-dollar {
  font-size: 14px;
  font-weight: 700;
}

.ic-sub {
  width: 13px;
  height: 13px;
  fill: #fff;
}

.sub-active {
  background: rgba(255, 255, 255, 0.2);
}

.side-foot {
  padding: 16px;
  border-top: 1px solid rgba(255, 255, 255, 0.2);
}

.side-user {
  display: flex;
  align-items: center;
  gap: 12px;
  height: 52px;
  padding: 0 12px;
  border-radius: 8px;
  background: rgba(255, 255, 255, 0.1);
}

.side-avatar {
  display: flex;
  align-items: center;
  justify-content: center;
  width: 32px;
  height: 32px;
  border-radius: 50%;
  background: rgba(255, 255, 255, 0.25);
}

.side-text {
  padding-top: 2px;
}

.side-name {
  font-size: 13px;
  font-weight: 700;
  line-height: 19px;
}

.side-role {
  font-size: 12px;
  line-height: 18px;
  color: rgba(255, 255, 255, 0.65);
}

/* main column */
.main {
  flex: 1;
  display: flex;
  flex-direction: column;
  min-width: 0;
}

.topbar {
  position: relative;
  z-index: 1;
  display: flex;
  align-items: center;
  justify-content: space-between;
  flex: none;
  height: 73px;
  padding: 0 32px;
  background: #fff;
  border-bottom: 1px solid #e5e7eb;
}

.page-title {
  font-size: 23.500px;
  font-weight: 700;
  color: #00708c;
}

.topbar-right {
  display: flex;
  align-items: center;
}

.topbar-user {
  margin: 0 16px 0 9px;
  font-size: 14px;
  color: #374151;
}

.btn-logout {
  display: flex;
  align-items: center;
  justify-content: center;
  gap: 8px;
  width: 122px;
  height: 40px;
  border-radius: 8px;
  font-size: 16px;
  color: #fff;
  background: linear-gradient(135deg, #ef4444, #dc2626);
  box-shadow: 0 4px 6px rgba(0, 0, 0, 0.12);
}

.main-body {
  flex: 1;
  display: flex;
  min-height: 0;
}

.content {
  flex: 1;
  min-width: 0;
  padding: 0 52px 0 56px;
  overflow: hidden;
}

.filter-card {
  margin-top: -31px;
  padding: 24px;
  background: #fff;
  border-radius: 12px;
  box-shadow: 0 4px 8px rgba(0, 0, 0, 0.08);
}

.filter-label {
  display: block;
  height: 27px;
  font-size: 14px;
  font-weight: 600;
  line-height: 18px;
  color: #374151;
}

.filter-label small {
  font-size: 12px;
  font-weight: 400;
  color: #6b7280;
}

.filter-row {
  display: flex;
  align-items: center;
}

.filter-select {
  width: 357px;
  height: 41px;
  padding: 0 16px;
  font-family: inherit;
  font-size: 16px;
  letter-spacing: inherit;
  background: #fff;
  color: #1f2937;
  border: 1px solid #d1d5db;
  border-radius: 8px;
}

.btn-square {
  display: flex;
  align-items: center;
  justify-content: center;
  width: 48px;
  height: 40px;
  border-radius: 8px;
}

.btn-grey {
  margin-left: 16px;
  background: #d1d5db;
}

.btn-red {
  margin-left: 8px;
  background: #dc2626;
}

.ic-pdf {
  width: 18px;
  height: 20px;
}

.period-box {
  display: flex;
  align-items: center;
  gap: 12px;
  height: 78px;
  margin-top: 24px;
  padding: 0 16px;
  background: #eff6ff;
  border: 1px solid #bfdbfe;
  border-radius: 8px;
}

.period-ic {
  width: 18px;
  height: 20px;
  flex: none;
}

.period-title {
  font-size: 15.500px;
  font-weight: 600;
  line-height: 24px;
  color: #1e40af;
}

.period-dates {
  font-size: 14px;
  line-height: 20px;
  color: #2563eb;
}

.period-dates small {
  margin-left: 8px;
  font-size: 12px;
  color: #1d4ed8;
}

.report-grid {
  display: grid;
  grid-template-columns: 1007px 492px;
  column-gap: 24px;
  margin-top: 24px;
}

.report {
  background: #fff;
  border-radius: 12px 12px 0 0;
  box-shadow: 0 2px 8px rgba(0, 0, 0, 0.06);
}

.report-head {
  height: 124px;
  padding-top: 24px;
  text-align: center;
  color: #fff;
  border-radius: 12px 12px 0 0;
  background: linear-gradient(135deg, #00708c, #005a75);
}

.report-head h2 {
  font-size: 24px;
  font-weight: 700;
  line-height: 34px;
}

.report-company {
  font-size: 14px;
  line-height: 24px;
  margin-top: 1px;
  opacity: 0.9;
}

.report-range {
  font-size: 12.200px;
  line-height: 20px;
  opacity: 0.85;
}

.report-body {
  padding: 32px 32px 0;
}

.report-section {
  margin-bottom: 24px;
  padding-bottom: 24px;
  border-bottom: 1px solid #d1d5db;
}

.section-title {
  height: 38px;
  margin-bottom: 16px;
  padding-bottom: 8px;
  font-size: 18px;
  font-weight: 700;
  line-height: 28px;
  color: #1f2937;
  border-bottom: 2px solid #d1d5db;
}

.line {
  display: flex;
  align-items: center;
  justify-content: space-between;
  height: 40px;
  padding-left: 16px;
  font-size: 15.500px;
}

.line-name {
  display: flex;
  align-items: center;
  color: #374151;
}

.line-ic {
  width: 19px;
  height: 17px;
  margin-right: 7px;
}

.line-val {
  font-size: 16px;
  font-weight: 700;
  color: #111827;
}

.line-val.red {
  font-weight: 600;
  color: #ef4444;
}

.gross-box {
  display: flex;
  align-items: center;
  justify-content: space-between;
  height: 60px;
  padding: 0 16px;
  background: #f0fdf4;
  border-left: 4px solid #22c55e;
  border-radius: 8px;
}

.gross-name {
  font-size: 18px;
  font-weight: 700;
  color: #1f2937;
}

.gross-val {
  font-size: 20px;
  font-weight: 700;
  color: #16a34a;
}

.gross-margin {
  margin-top: 8px;
  font-size: 12px;
  line-height: 18px;
  text-align: right;
  color: #6b7280;
}

.thick-rule {
  height: 4px;
  margin: 22px 0 25px;
  background: #d1d5db;
}

.metrics {
  display: flex;
  flex-direction: column;
  gap: 16px;
}

.metric {
  height: 201px;
  padding: 24px;
  color: #fff;
  border-radius: 12px;
  box-shadow: 0 4px 8px rgba(0, 0, 0, 0.08);
}

.metric-green { background: linear-gradient(135deg, #22c55e, #16a34a); }
.metric-blue { background: linear-gradient(135deg, #3b82f6, #2563eb); }
.metric-orange { background: linear-gradient(135deg, #f97316, #ea580c); }

.metric-head {
  display: flex;
  align-items: center;
  justify-content: space-between;
  height: 30px;
}

.metric-label {
  display: flex;
  align-items: center;
  font-size: 14px;
  font-weight: 600;
  color: rgba(255, 255, 255, 0.85);
}

.emoji {
  width: 15px;
  height: 15px;
  margin: 0 6px 0 2px;
}

.emoji-sm {
  width: 13px;
  height: 13px;
  margin: 0 5px 0 2px;
}

.metric-ic {
  width: 19px;
  height: 20px;
  color: rgba(255, 255, 255, 0.7);
  fill: rgba(255, 255, 255, 0.7);
}

.metric-ic-chart {
  width: 25px;
  height: 24px;
}

.metric-cogs {
  display: flex;
  align-items: flex-start;
  width: 30px;
  height: 26px;
  color: rgba(255, 255, 255, 0.7);
}

.cog-a {
  width: 17px;
  height: 17px;
}

.cog-b {
  width: 16px;
  height: 16px;
  margin: 9px 0 0 -3px;
}

.metric-value {
  margin-top: 15px;
  font-size: 30px;
  font-weight: 700;
  line-height: 36px;
}

.metric-sub {
  margin-top: 7px;
  padding-bottom: 9px;
  font-size: 12px;
  line-height: 18px;
  color: rgba(255, 255, 255, 0.85);
  border-bottom: 1px solid rgba(255, 255, 255, 0.25);
}

.metric-status {
  display: flex;
  align-items: center;
  margin-top: 17px;
  font-size: 12px;
  font-weight: 600;
  letter-spacing: -0.03em;
  line-height: 20px;
  white-space: pre;
}

.check {
  font-size: 14px;
}

.scroll-rail {
  display: flex;
  flex-direction: column;
  align-items: center;
  flex: none;
  width: 23px;
  padding: 10px 0 10px;
  background: #fdfdfd;
}

.arrow-up,
.arrow-down {
  width: 0;
  height: 0;
  border-left: 6px solid transparent;
  border-right: 6px solid transparent;
}

.arrow-up {
  border-bottom: 8px solid #6e6e6e;
}

.arrow-down {
  margin-top: auto;
  border-top: 8px solid #6e6e6e;
}

.scroll-thumb {
  width: 11px;
  height: 397px;
  margin-top: 90px;
  border-radius: 6px;
  background: #8c8c8c;
}

/* taskbar */
.taskbar {
  display: flex;
  align-items: center;
  flex: none;
  height: 60px;
  padding-left: 26px;
  background: #1a1a1a;
  color: #fff;
  border-top: 1px solid #2c2c2c;
}

.stock {
  position: relative;
  display: flex;
  align-items: center;
  width: 436px;
  height: 100%;
}

.stock-ic {
  width: 30px;
  height: 18px;
  margin-top: 14px;
}

.stock-badge {
  position: absolute;
  left: 13px;
  top: 7px;
  width: 20px;
  height: 20px;
  border-radius: 50%;
  background: #ff9aa2;
  color: #1a1a1a;
  font-size: 13px;
  line-height: 20px;
  text-align: center;
}

.stock-text {
  margin-left: 8px;
  font-size: 15px;
  line-height: 20px;
}

.stock-pct {
  color: #6cc04a;
  font-size: 14.500px;
}

.app-cell {
  position: relative;
  display: flex;
  align-items: center;
  justify-content: center;
  flex: none;
  width: 55px;
  height: 100%;
}

.app-running::after,
.app-active::after {
  content: "";
  position: absolute;
  bottom: 3px;
  left: 50%;
  width: 8px;
  height: 3px;
  margin-left: -4px;
  border-radius: 2px;
  background: #999;
}

.app-active::before {
  content: "";
  position: absolute;
  inset: 5px 1px;
  border-radius: 5px;
  background: #282828;
}

.app-active svg {
  position: relative;
}

.app-active::after {
  width: 18px;
  margin-left: -9px;
  bottom: 6px;
  background: #2fe58f;
}

.search {
  display: flex;
  align-items: center;
  flex: none;
  width: 275px;
  height: 40px;
  margin: 0 3px 0 3px;
  padding: 0 10px 0 14px;
  background: #3b3b3b;
  border: 1px solid #4d4d4d;
  border-radius: 20px;
  color: #ccc;
  font-size: 16px;
  letter-spacing: 0;
}

.search span {
  margin-left: 12px;
}

.search-art {
  width: 56px;
  height: 34px;
  margin-left: auto;
  margin-top: 4px;
}

.wa-badge {
  position: absolute;
  top: 7px;
  right: 2px;
  min-width: 22px;
  height: 20px;
  padding: 0 3px;
  border-radius: 10px;
  background: #2fe58f;
  color: #111;
  font-size: 12px;
  line-height: 20px;
  text-align: center;
}

.tray {
  display: grid;
  grid-template-columns: 34px 44px 56px 36px 26px 34px 91px 42px;
  align-items: center;
  justify-items: center;
  width: 363px;
  margin-left: auto;
  margin-right: 12px;
  font-size: 14px;
}

.tray-cloud {
  position: relative;
  display: flex;
}

.tray-info {
  position: absolute;
  right: -5px;
  bottom: -3px;
  width: 12px;
  height: 12px;
  border-radius: 50%;
  background: #1a73d9;
  font-size: 9px;
  line-height: 12px;
  font-weight: 700;
  text-align: center;
}

.tray-clock {
  justify-self: end;
  text-align: right;
  font-size: 14.500px;
  letter-spacing: 0;
  line-height: 20px;
}
```
